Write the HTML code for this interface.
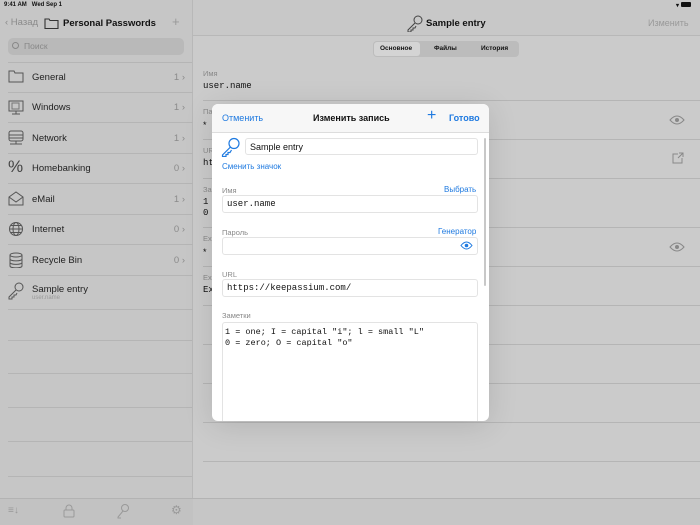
<!DOCTYPE html>
<html><head><meta charset="utf-8"><style>
*{margin:0;padding:0;box-sizing:border-box}
body{width:700px;height:525px;overflow:hidden;background:#cbcbcb;font-family:"Liberation Sans","Noto Sans CJK SC",sans-serif;position:relative;color:#111}
.a{position:absolute}
.side{left:0;top:0;width:193px;height:525px;background:#c6c6c6;border-right:1px solid #b8b8b8}
.row{position:absolute;left:8px;width:185px;height:30px;border-bottom:1px solid #b5b5b5}
.row .t{position:absolute;left:24px;top:9px;font-size:9.5px;color:#222}
.row .n{position:absolute;right:8px;top:9px;font-size:9.5px;color:#8a8a8a}
.row svg{position:absolute;left:0;top:6px}
.sep{position:absolute;height:1px;background:#b5b5b5}
.lbl{font-size:7.5px;color:#888}
.mono{font-family:"Liberation Mono",monospace}
.blue{color:#1f7ae0}
.field{position:absolute;background:#fff;border:1px solid #e3e3e3;border-radius:3px}
</style></head><body>
<div class="a side">
 <div class="a" style="left:4px;top:2px;font-size:6px;font-weight:bold">9:41 AM&nbsp;&nbsp; Wed Sep 1</div>
 <div class="a" style="left:5px;top:17px;font-size:9.5px;color:#8a8a8a">&#8249; Назад</div>
 <svg class="a" style="left:44px;top:17px" width="15" height="12"><path d="M1 2h4l1 1.5h8v8H1z" fill="none" stroke="#333" stroke-width="1.1"/></svg>
 <div class="a" style="left:63px;top:18px;font-size:9.5px;font-weight:bold">Personal Passwords</div>
 <div class="a" style="left:172px;top:14px;font-size:13px;color:#999">+</div>
 <div class="a" style="left:8px;top:38px;width:176px;height:17px;background:#b9b9b9;border-radius:5px;font-size:8.5px;color:#888;padding:3px 0 0 16px">Поиск</div>
 <div class="a" style="left:12px;top:42px;width:7px;height:7px;border:1px solid #888;border-radius:50%"></div>
 <div class="sep" style="left:8px;right:0;top:62px"></div>
 <div class="row" style="top:63px"><svg width="16" height="14"><path d="M1 2h5l1 2h8v9H1z" fill="none" stroke="#555"/></svg><span class="t">General</span><span class="n">1 &#8250;</span></div>
 <div class="row" style="top:93px"><svg width="16" height="16"><rect x="1" y="2" width="14" height="10" fill="none" stroke="#555"/><rect x="4" y="4" width="7" height="6" fill="none" stroke="#777"/><path d="M8 12v3M4 15h8" stroke="#555"/></svg><span class="t">Windows</span><span class="n">1 &#8250;</span></div>
 <div class="row" style="top:124px"><svg width="16" height="16"><rect x="1" y="1" width="14" height="10" rx="2" fill="none" stroke="#555"/><path d="M1 5h14M1 8h14M8 11v3M2 14h12" stroke="#555"/></svg><span class="t">Network</span><span class="n">1 &#8250;</span></div>
 <div class="row" style="top:154px"><div class="a" style="left:0;top:3px;font-size:17px;color:#444">%</div><span class="t">Homebanking</span><span class="n">0 &#8250;</span></div>
 <div class="row" style="top:185px"><svg width="16" height="16"><path d="M1 6l7-5 7 5v8H1z M1 6l7 5 7-5" fill="none" stroke="#555"/></svg><span class="t">eMail</span><span class="n">1 &#8250;</span></div>
 <div class="row" style="top:215px"><svg width="16" height="16"><circle cx="8" cy="8" r="6.5" fill="none" stroke="#555"/><ellipse cx="8" cy="8" rx="3" ry="6.5" fill="none" stroke="#555"/><path d="M1.5 8h13M3 4.5h10M3 11.5h10" stroke="#555"/></svg><span class="t">Internet</span><span class="n">0 &#8250;</span></div>
 <div class="row" style="top:246px"><svg width="16" height="16"><ellipse cx="8" cy="3" rx="6" ry="2" fill="none" stroke="#555"/><path d="M2 3v11c0 2.5 12 2.5 12 0V3M2 7c0 2.5 12 2.5 12 0M2 10.5c0 2.5 12 2.5 12 0" fill="none" stroke="#555"/></svg><span class="t">Recycle Bin</span><span class="n">0 &#8250;</span></div>
 <div class="row" style="top:276px;height:34px"><svg width="16" height="18"><circle cx="11" cy="5" r="4" fill="none" stroke="#555"/><path d="M8 8l-7 7v2h3v-2h2v-2h2l1-2" fill="none" stroke="#555"/></svg><span class="t" style="top:8px">Sample entry</span><span class="a" style="left:24px;top:19px;font-size:6px;color:#999">user.name</span></div>
 <div class="sep" style="left:8px;right:0;top:340px"></div>
 <div class="sep" style="left:8px;right:0;top:373px"></div>
 <div class="sep" style="left:8px;right:0;top:407px"></div>
 <div class="sep" style="left:8px;right:0;top:441px"></div>
 <div class="sep" style="left:8px;right:0;top:476px"></div>
 <div class="a" style="left:0;top:498px;width:193px;height:27px;background:#c2c2c2;border-top:1px solid #b3b3b3"></div>
 <div class="a" style="left:8px;top:505px;font-size:10px;color:#999">&#8801;&#8595;</div>
 <svg class="a" style="left:63px;top:504px" width="12" height="14"><rect x="1" y="6" width="10" height="7" rx="1" fill="none" stroke="#999"/><path d="M3 6V4a3 3 0 0 1 6 0v2" fill="none" stroke="#999"/></svg>
 <svg class="a" style="left:116px;top:503px" width="14" height="16"><circle cx="9" cy="5" r="3.5" fill="none" stroke="#999"/><path d="M7 8l-5 6v1h3" fill="none" stroke="#999"/></svg>
 <div class="a" style="left:171px;top:503px;font-size:12px;color:#999">&#9881;</div>
</div>
<div class="a" style="left:193px;top:0;width:507px;height:36px;background:#c8c8c8;border-bottom:1px solid #b8b8b8"></div>
<div class="a" style="left:676px;top:2px;font-size:6px;font-weight:bold">&#9662; <span style="display:inline-block;width:10px;height:5px;background:#111;border-radius:1px"></span></div>
<svg class="a" style="left:407px;top:15px" width="16" height="17"><circle cx="11" cy="5" r="4" fill="none" stroke="#444"/><path d="M8 8l-7 7v2h3v-2h2v-2h2l1-2" fill="none" stroke="#444"/></svg>
<div class="a" style="left:426px;top:18px;font-size:9.5px;font-weight:bold">Sample entry</div>
<div class="a" style="left:648px;top:18px;font-size:9px;color:#999">Изменить</div>
<div class="a" style="left:373px;top:41px;width:146px;height:16px;background:#bcbcbc;border-radius:4px"></div>
<div class="a" style="left:374px;top:42px;width:46px;height:14px;background:#d4d4d4;border-radius:3px"></div>
<div class="a" style="left:380px;top:45px;font-size:6.5px;font-weight:bold">Основное</div>
<div class="a" style="left:434px;top:45px;font-size:6.5px;font-weight:bold">Файлы</div>
<div class="a" style="left:481px;top:45px;font-size:6.5px;font-weight:bold">История</div>
<div class="a lbl" style="left:203px;top:69px">Имя</div>
<div class="a mono" style="left:203px;top:81px;font-size:9px">user.name</div>
<div class="sep" style="left:203px;right:0;top:100px"></div>
<div class="a lbl" style="left:203px;top:107px">Па</div><div class="a" style="left:203px;top:120px;font-size:9px">*</div>
<div class="sep" style="left:203px;right:0;top:139px"></div>
<div class="a lbl" style="left:203px;top:146px">UR</div><div class="a mono" style="left:203px;top:158px;font-size:9px">ht</div>
<div class="sep" style="left:203px;right:0;top:178px"></div>
<div class="a lbl" style="left:203px;top:185px">За</div><div class="a mono" style="left:203px;top:197px;font-size:9px;line-height:11px">1<br>0</div>
<div class="sep" style="left:203px;right:0;top:227px"></div>
<div class="a lbl" style="left:203px;top:234px">Ex</div><div class="a" style="left:203px;top:247px;font-size:9px">*</div>
<div class="sep" style="left:203px;right:0;top:266px"></div>
<div class="a lbl" style="left:203px;top:273px">Ex</div><div class="a mono" style="left:203px;top:285px;font-size:9px">Ex</div>
<div class="sep" style="left:203px;right:0;top:305px"></div>
<div class="sep" style="left:203px;right:0;top:344px"></div>
<div class="sep" style="left:203px;right:0;top:383px"></div>
<div class="sep" style="left:203px;right:0;top:422px"></div>
<div class="sep" style="left:203px;right:0;top:461px"></div>
<div class="a" style="left:193px;top:498px;width:507px;height:27px;background:#c6c6c6;border-top:1px solid #b3b3b3"></div>
<svg class="a" style="left:669px;top:115px" width="16" height="10"><path d="M1 5q7-8 14 0q-7 8-14 0z" fill="none" stroke="#888"/><circle cx="8" cy="5" r="2" fill="#888"/></svg>
<svg class="a" style="left:669px;top:242px" width="16" height="10"><path d="M1 5q7-8 14 0q-7 8-14 0z" fill="none" stroke="#888"/><circle cx="8" cy="5" r="2" fill="#888"/></svg>
<svg class="a" style="left:672px;top:152px" width="12" height="12"><path d="M6 2H1v9h9V6M7 1h4v4M11 1L6 6" fill="none" stroke="#888"/></svg>
<div class="a" style="left:212px;top:104px;width:277px;height:317px;background:#fff;border-radius:6px;overflow:hidden;box-shadow:0 4px 30px rgba(0,0,0,.12)">
 <div class="a" style="left:0;top:0;width:277px;height:29px;background:#f7f7f7;border-bottom:1px solid #ddd"></div>
 <div class="a blue" style="left:10px;top:9px;font-size:9px">Отменить</div>
 <div class="a" style="left:101px;top:9px;font-size:9px;font-weight:bold">Изменить запись</div>
 <div class="a blue" style="left:215px;top:3px;font-size:16px">+</div>
 <div class="a blue" style="left:237px;top:9px;font-size:9px;font-weight:bold">Готово</div>
 <div class="a" style="left:272px;top:34px;width:2px;height:148px;background:#c8c8c8;border-radius:1px"></div>
 <svg class="a" style="left:9px;top:33px" width="20" height="20"><circle cx="13" cy="6.5" r="5" fill="none" stroke="#1f7ae0" stroke-width="1.2"/><path d="M9.5 10l-8 8v1.5h3.5v-2h2v-2h2l1.5-2.5" fill="none" stroke="#1f7ae0" stroke-width="1.2"/></svg>
 <div class="field" style="left:33px;top:34px;width:233px;height:17px;font-size:9px;padding:3px 0 0 4px">Sample entry</div>
 <div class="a blue" style="left:10px;top:58px;font-size:8px">Сменить значок</div>
 <div class="a lbl" style="left:10px;top:82px">Имя</div>
 <div class="a blue" style="left:232px;top:81px;font-size:8px">Выбрать</div>
 <div class="field mono" style="left:10px;top:91px;width:256px;height:18px;font-size:9px;padding:3px 0 0 4px">user.name</div>
 <div class="a lbl" style="left:10px;top:124px">Пароль</div>
 <div class="a blue" style="left:226px;top:123px;font-size:8px">Генератор</div>
 <div class="field" style="left:10px;top:133px;width:256px;height:18px"></div>
 <svg class="a" style="left:248px;top:137px" width="13" height="9"><path d="M1 4.5q5.5-7 11 0q-5.5 7-11 0z" fill="none" stroke="#1f7ae0"/><circle cx="6.5" cy="4.5" r="1.8" fill="#1f7ae0"/></svg>
 <div class="a lbl" style="left:10px;top:166px">URL</div>
 <div class="field mono" style="left:10px;top:175px;width:256px;height:18px;font-size:9px;padding:3px 0 0 4px">https://keepassium.com/</div>
 <div class="a lbl" style="left:10px;top:207px">Заметки</div>
 <div class="field mono" style="left:10px;top:218px;width:256px;height:110px;font-size:8.5px;line-height:10.5px;padding:4px 0 0 2px">1 = one; I = capital "i"; l = small "L"<br>0 = zero; O = capital "o"</div>
</div>
</body></html>
